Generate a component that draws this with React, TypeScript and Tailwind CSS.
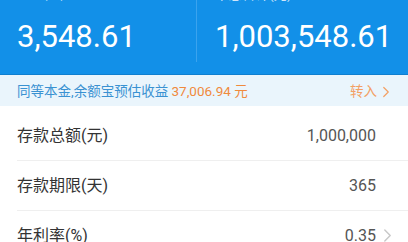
import React from "react";

const font = { fontFamily: 'Roboto, "Noto Sans CJK SC", sans-serif' };

function Chevron({ className }: { className?: string }) {
  return (
    <svg viewBox="0 0 10 16" className={className} fill="none" stroke="currentColor" strokeWidth="1.6" strokeLinecap="round" strokeLinejoin="round">
      <path d="M2 2 L8 8 L2 14" />
    </svg>
  );
}

function Row({ label, value, arrow }: { label: string; value: string; arrow?: boolean }) {
  return (
    <div className="flex h-[50px] items-center border-b border-[#efefef] ml-[17px] pr-[16px]">
      <div className="flex-1 text-[16px] text-[#333]">{label}</div>
      <div className="text-[16px] text-[#555]">{value}</div>
      <div className="ml-[6px] w-[10px] flex justify-center text-[#c8c8c8]">
        {arrow ? <Chevron className="w-[9px] h-[15px]" /> : null}
      </div>
    </div>
  );
}

export default function App() {
  return (
    <div className="w-[408px] h-[242px] overflow-hidden bg-white" style={font}>
      <div className="-mt-[14px]">
        <div className="bg-[#1290e8] flex pb-[12px] border-b border-[#0f7fcf]">
          <div className="w-[197px] border-r border-[#3aa3ee] pl-[17px] pb-[7px]">
            <div className="text-[13px] leading-[16px] text-[#cfe6fa]">利息(元)</div>
            <div className="mt-[17px] text-[31px] leading-[36px] font-normal text-white">3,548.61</div>
          </div>
          <div className="flex-1 pl-[18px]">
            <div className="text-[13.5px] leading-[16px] text-[#cfe6fa]">本息合计(元)</div>
            <div className="mt-[17px] text-[31px] leading-[36px] font-normal text-white">1,003,548.61</div>
          </div>
        </div>
        <div className="h-[31px] bg-[#eaf5fc] flex items-center pt-[2px] pl-[17px] pr-[18px] text-[13.5px]">
          <div className="flex-1 text-[#3a92d2]">
            同等本金,余额宝预估收益 <span className="text-[#f08a3c]">37,006.94 元</span>
          </div>
          <div className="flex items-center text-[#f3a064]">
            <span>转入</span>
            <Chevron className="ml-[5px] w-[8px] h-[12px]" />
          </div>
        </div>
        <div className="mt-[5px]">
          <Row label="存款总额(元)" value="1,000,000" />
          <Row label="存款期限(天)" value="365" />
          <Row label="年利率(%)" value="0.35" arrow />
        </div>
      </div>
    </div>
  );
}
